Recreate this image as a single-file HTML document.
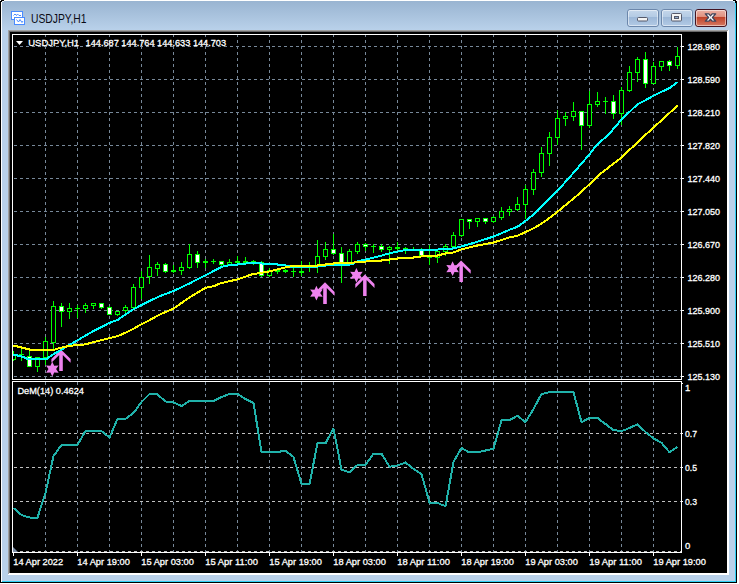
<!DOCTYPE html>
<html><head><meta charset="utf-8"><title>USDJPY,H1</title>
<style>html,body{margin:0;padding:0;background:#fff;overflow:hidden}svg{display:block}text{font-family:"Liberation Sans",sans-serif}</style>
</head><body>
<svg width="739" height="584" viewBox="0 0 739 584">
<defs>
<linearGradient id="tb" x1="0" y1="0" x2="0" y2="1"><stop offset="0" stop-color="#99b4d1"/><stop offset="1" stop-color="#b9d1ea"/></linearGradient>
<linearGradient id="bt" x1="0" y1="0" x2="0" y2="1"><stop offset="0" stop-color="#c6d7eb"/><stop offset="0.43" stop-color="#b4cbe4"/><stop offset="0.47" stop-color="#9db8d8"/><stop offset="1" stop-color="#b3cbe6"/></linearGradient>
<linearGradient id="cl" x1="0" y1="0" x2="0" y2="1"><stop offset="0" stop-color="#ecb2a6"/><stop offset="0.41" stop-color="#e09382"/><stop offset="0.45" stop-color="#bf4128"/><stop offset="1" stop-color="#d67c66"/></linearGradient>
<clipPath id="cm"><rect x="13" y="35" width="668" height="344"/></clipPath>
</defs>
<rect width="739" height="584" fill="#fff"/>
<g shape-rendering="crispEdges">
<rect x="0" y="1" width="737" height="582" fill="#000"/>
<rect x="1" y="1" width="735" height="581" fill="#fff"/>
<rect x="2" y="1" width="734" height="581" fill="#2fd0f5"/>
<rect x="2" y="1" width="733" height="580" fill="#b9d1ea"/>
<rect x="2" y="1" width="733" height="29" fill="url(#tb)"/>
<rect x="8" y="30" width="721" height="545" fill="#fff"/>
<rect x="8" y="30" width="720" height="544" fill="#a0a0a0"/>
<rect x="9" y="31" width="720" height="544" fill="#fff"/>
<rect x="9" y="31" width="718" height="542" fill="#696969"/>
<rect x="10" y="32" width="717" height="541" fill="#000"/>
<rect x="1" y="0" width="3" height="1" fill="#000"/><rect x="1" y="1" width="1" height="1" fill="#000"/><rect x="2" y="1" width="2" height="1" fill="#e8f0fa"/>
<rect x="733" y="0" width="3" height="1" fill="#000"/><rect x="735" y="1" width="2" height="2" fill="#000"/><rect x="733" y="1" width="2" height="1" fill="#d8f4fc"/><rect x="734" y="2" width="1" height="1" fill="#8fe2f8"/>
</g>
<g shape-rendering="crispEdges" stroke="#778899" stroke-width="1" fill="none" stroke-dasharray="3 3">
<line x1="45.5" y1="34" x2="45.5" y2="379" stroke-dashoffset="0"/>
<line x1="45.5" y1="382" x2="45.5" y2="552" stroke-dashoffset="0"/>
<line x1="77.5" y1="34" x2="77.5" y2="379" stroke-dashoffset="0"/>
<line x1="77.5" y1="382" x2="77.5" y2="552" stroke-dashoffset="0"/>
<line x1="109.5" y1="34" x2="109.5" y2="379" stroke-dashoffset="0"/>
<line x1="109.5" y1="382" x2="109.5" y2="552" stroke-dashoffset="0"/>
<line x1="141.5" y1="34" x2="141.5" y2="379" stroke-dashoffset="0"/>
<line x1="141.5" y1="382" x2="141.5" y2="552" stroke-dashoffset="0"/>
<line x1="173.5" y1="34" x2="173.5" y2="379" stroke-dashoffset="0"/>
<line x1="173.5" y1="382" x2="173.5" y2="552" stroke-dashoffset="0"/>
<line x1="205.5" y1="34" x2="205.5" y2="379" stroke-dashoffset="0"/>
<line x1="205.5" y1="382" x2="205.5" y2="552" stroke-dashoffset="0"/>
<line x1="237.5" y1="34" x2="237.5" y2="379" stroke-dashoffset="0"/>
<line x1="237.5" y1="382" x2="237.5" y2="552" stroke-dashoffset="0"/>
<line x1="269.5" y1="34" x2="269.5" y2="379" stroke-dashoffset="0"/>
<line x1="269.5" y1="382" x2="269.5" y2="552" stroke-dashoffset="0"/>
<line x1="301.5" y1="34" x2="301.5" y2="379" stroke-dashoffset="0"/>
<line x1="301.5" y1="382" x2="301.5" y2="552" stroke-dashoffset="0"/>
<line x1="333.5" y1="34" x2="333.5" y2="379" stroke-dashoffset="0"/>
<line x1="333.5" y1="382" x2="333.5" y2="552" stroke-dashoffset="0"/>
<line x1="365.5" y1="34" x2="365.5" y2="379" stroke-dashoffset="0"/>
<line x1="365.5" y1="382" x2="365.5" y2="552" stroke-dashoffset="0"/>
<line x1="397.5" y1="34" x2="397.5" y2="379" stroke-dashoffset="0"/>
<line x1="397.5" y1="382" x2="397.5" y2="552" stroke-dashoffset="0"/>
<line x1="429.5" y1="34" x2="429.5" y2="379" stroke-dashoffset="0"/>
<line x1="429.5" y1="382" x2="429.5" y2="552" stroke-dashoffset="0"/>
<line x1="461.5" y1="34" x2="461.5" y2="379" stroke-dashoffset="0"/>
<line x1="461.5" y1="382" x2="461.5" y2="552" stroke-dashoffset="0"/>
<line x1="493.5" y1="34" x2="493.5" y2="379" stroke-dashoffset="0"/>
<line x1="493.5" y1="382" x2="493.5" y2="552" stroke-dashoffset="0"/>
<line x1="525.5" y1="34" x2="525.5" y2="379" stroke-dashoffset="0"/>
<line x1="525.5" y1="382" x2="525.5" y2="552" stroke-dashoffset="0"/>
<line x1="557.5" y1="34" x2="557.5" y2="379" stroke-dashoffset="0"/>
<line x1="557.5" y1="382" x2="557.5" y2="552" stroke-dashoffset="0"/>
<line x1="589.5" y1="34" x2="589.5" y2="379" stroke-dashoffset="0"/>
<line x1="589.5" y1="382" x2="589.5" y2="552" stroke-dashoffset="0"/>
<line x1="621.5" y1="34" x2="621.5" y2="379" stroke-dashoffset="0"/>
<line x1="621.5" y1="382" x2="621.5" y2="552" stroke-dashoffset="0"/>
<line x1="653.5" y1="34" x2="653.5" y2="379" stroke-dashoffset="0"/>
<line x1="653.5" y1="382" x2="653.5" y2="552" stroke-dashoffset="0"/>
<line x1="14" y1="46.5" x2="681" y2="46.5"/>
<line x1="14" y1="79.5" x2="681" y2="79.5"/>
<line x1="14" y1="112.5" x2="681" y2="112.5"/>
<line x1="14" y1="145.5" x2="681" y2="145.5"/>
<line x1="14" y1="178.5" x2="681" y2="178.5"/>
<line x1="14" y1="211.5" x2="681" y2="211.5"/>
<line x1="14" y1="244.5" x2="681" y2="244.5"/>
<line x1="14" y1="277.5" x2="681" y2="277.5"/>
<line x1="14" y1="310.5" x2="681" y2="310.5"/>
<line x1="14" y1="343.5" x2="681" y2="343.5"/>
<line x1="14" y1="376.5" x2="681" y2="376.5"/>
</g>
<g shape-rendering="crispEdges" stroke="#c0c0c0" stroke-width="1" fill="none" stroke-dasharray="3 3">
<line x1="14" y1="433.5" x2="681" y2="433.5"/>
<line x1="14" y1="467.5" x2="681" y2="467.5"/>
<line x1="14" y1="501.5" x2="681" y2="501.5"/>
<line x1="14" y1="551.5" x2="681" y2="551.5"/>
</g>
<g shape-rendering="crispEdges" clip-path="url(#cm)">
<rect x="13" y="351" width="1" height="10" fill="#00ff00"/>
<rect x="11" y="355" width="5" height="5" fill="#00ff00"/>
<rect x="12" y="356" width="3" height="3" fill="#000"/>
<rect x="21" y="348" width="1" height="13" fill="#00ff00"/>
<rect x="19" y="354" width="5" height="1" fill="#00ff00"/>
<rect x="29" y="350" width="1" height="17" fill="#00ff00"/>
<rect x="27" y="356" width="5" height="11" fill="#00ff00"/>
<rect x="28" y="357" width="3" height="9" fill="#fff"/>
<rect x="37" y="357" width="1" height="15" fill="#00ff00"/>
<rect x="35" y="357" width="5" height="10" fill="#00ff00"/>
<rect x="36" y="358" width="3" height="8" fill="#000"/>
<rect x="45" y="337" width="1" height="28" fill="#00ff00"/>
<rect x="43" y="341" width="5" height="17" fill="#00ff00"/>
<rect x="44" y="342" width="3" height="15" fill="#000"/>
<rect x="53" y="301" width="1" height="48" fill="#00ff00"/>
<rect x="51" y="306" width="5" height="37" fill="#00ff00"/>
<rect x="52" y="307" width="3" height="35" fill="#000"/>
<rect x="61" y="303" width="1" height="24" fill="#00ff00"/>
<rect x="59" y="306" width="5" height="6" fill="#00ff00"/>
<rect x="60" y="307" width="3" height="4" fill="#fff"/>
<rect x="69" y="303" width="1" height="16" fill="#00ff00"/>
<rect x="67" y="308" width="5" height="4" fill="#00ff00"/>
<rect x="68" y="309" width="3" height="2" fill="#000"/>
<rect x="77" y="305" width="1" height="13" fill="#00ff00"/>
<rect x="75" y="308" width="5" height="1" fill="#00ff00"/>
<rect x="85" y="303" width="1" height="10" fill="#00ff00"/>
<rect x="83" y="305" width="5" height="4" fill="#00ff00"/>
<rect x="84" y="306" width="3" height="2" fill="#000"/>
<rect x="93" y="303" width="1" height="6" fill="#00ff00"/>
<rect x="91" y="303" width="5" height="3" fill="#00ff00"/>
<rect x="92" y="304" width="3" height="1" fill="#000"/>
<rect x="101" y="303" width="1" height="6" fill="#00ff00"/>
<rect x="99" y="303" width="5" height="5" fill="#00ff00"/>
<rect x="100" y="304" width="3" height="3" fill="#fff"/>
<rect x="109" y="306" width="1" height="9" fill="#00ff00"/>
<rect x="107" y="307" width="5" height="8" fill="#00ff00"/>
<rect x="108" y="308" width="3" height="6" fill="#fff"/>
<rect x="117" y="311" width="1" height="5" fill="#00ff00"/>
<rect x="115" y="311" width="5" height="4" fill="#00ff00"/>
<rect x="116" y="312" width="3" height="2" fill="#000"/>
<rect x="125" y="305" width="1" height="8" fill="#00ff00"/>
<rect x="123" y="307" width="5" height="4" fill="#00ff00"/>
<rect x="124" y="308" width="3" height="2" fill="#000"/>
<rect x="133" y="284" width="1" height="24" fill="#00ff00"/>
<rect x="131" y="287" width="5" height="21" fill="#00ff00"/>
<rect x="132" y="288" width="3" height="19" fill="#000"/>
<rect x="141" y="271" width="1" height="28" fill="#00ff00"/>
<rect x="139" y="277" width="5" height="11" fill="#00ff00"/>
<rect x="140" y="278" width="3" height="9" fill="#000"/>
<rect x="149" y="255" width="1" height="29" fill="#00ff00"/>
<rect x="147" y="267" width="5" height="10" fill="#00ff00"/>
<rect x="148" y="268" width="3" height="8" fill="#000"/>
<rect x="157" y="262" width="1" height="14" fill="#00ff00"/>
<rect x="155" y="264" width="5" height="5" fill="#00ff00"/>
<rect x="156" y="265" width="3" height="3" fill="#000"/>
<rect x="165" y="263" width="1" height="10" fill="#00ff00"/>
<rect x="163" y="264" width="5" height="8" fill="#00ff00"/>
<rect x="164" y="265" width="3" height="6" fill="#fff"/>
<rect x="173" y="265" width="1" height="8" fill="#00ff00"/>
<rect x="171" y="270" width="5" height="2" fill="#00ff00"/>
<rect x="181" y="262" width="1" height="13" fill="#00ff00"/>
<rect x="179" y="267" width="5" height="4" fill="#00ff00"/>
<rect x="180" y="268" width="3" height="2" fill="#000"/>
<rect x="189" y="244" width="1" height="25" fill="#00ff00"/>
<rect x="187" y="254" width="5" height="14" fill="#00ff00"/>
<rect x="188" y="255" width="3" height="12" fill="#000"/>
<rect x="197" y="251" width="1" height="17" fill="#00ff00"/>
<rect x="195" y="254" width="5" height="9" fill="#00ff00"/>
<rect x="196" y="255" width="3" height="7" fill="#fff"/>
<rect x="205" y="259" width="1" height="9" fill="#00ff00"/>
<rect x="203" y="261" width="5" height="2" fill="#00ff00"/>
<rect x="213" y="259" width="1" height="5" fill="#00ff00"/>
<rect x="211" y="261" width="5" height="1" fill="#00ff00"/>
<rect x="221" y="261" width="1" height="6" fill="#00ff00"/>
<rect x="219" y="261" width="5" height="4" fill="#00ff00"/>
<rect x="220" y="262" width="3" height="2" fill="#fff"/>
<rect x="229" y="259" width="1" height="7" fill="#00ff00"/>
<rect x="227" y="262" width="5" height="4" fill="#00ff00"/>
<rect x="228" y="263" width="3" height="2" fill="#000"/>
<rect x="237" y="256" width="1" height="7" fill="#00ff00"/>
<rect x="235" y="261" width="5" height="2" fill="#00ff00"/>
<rect x="245" y="257" width="1" height="6" fill="#00ff00"/>
<rect x="243" y="261" width="5" height="2" fill="#00ff00"/>
<rect x="253" y="260" width="1" height="5" fill="#00ff00"/>
<rect x="251" y="261" width="5" height="1" fill="#00ff00"/>
<rect x="261" y="261" width="1" height="16" fill="#00ff00"/>
<rect x="259" y="262" width="5" height="14" fill="#00ff00"/>
<rect x="260" y="263" width="3" height="12" fill="#fff"/>
<rect x="269" y="268" width="1" height="9" fill="#00ff00"/>
<rect x="267" y="270" width="5" height="6" fill="#00ff00"/>
<rect x="268" y="271" width="3" height="4" fill="#000"/>
<rect x="277" y="269" width="1" height="5" fill="#00ff00"/>
<rect x="275" y="270" width="5" height="2" fill="#00ff00"/>
<rect x="285" y="269" width="1" height="4" fill="#00ff00"/>
<rect x="283" y="270" width="5" height="2" fill="#00ff00"/>
<rect x="293" y="267" width="1" height="10" fill="#00ff00"/>
<rect x="291" y="271" width="5" height="1" fill="#00ff00"/>
<rect x="301" y="261" width="1" height="15" fill="#00ff00"/>
<rect x="299" y="271" width="5" height="2" fill="#00ff00"/>
<rect x="309" y="262" width="1" height="10" fill="#00ff00"/>
<rect x="307" y="266" width="5" height="1" fill="#00ff00"/>
<rect x="317" y="240" width="1" height="33" fill="#00ff00"/>
<rect x="315" y="256" width="5" height="10" fill="#00ff00"/>
<rect x="316" y="257" width="3" height="8" fill="#000"/>
<rect x="325" y="242" width="1" height="18" fill="#00ff00"/>
<rect x="323" y="249" width="5" height="8" fill="#00ff00"/>
<rect x="324" y="250" width="3" height="6" fill="#000"/>
<rect x="333" y="234" width="1" height="21" fill="#00ff00"/>
<rect x="331" y="249" width="5" height="5" fill="#00ff00"/>
<rect x="332" y="250" width="3" height="3" fill="#fff"/>
<rect x="341" y="247" width="1" height="36" fill="#00ff00"/>
<rect x="339" y="253" width="5" height="10" fill="#00ff00"/>
<rect x="340" y="254" width="3" height="8" fill="#fff"/>
<rect x="349" y="249" width="1" height="14" fill="#00ff00"/>
<rect x="347" y="251" width="5" height="12" fill="#00ff00"/>
<rect x="348" y="252" width="3" height="10" fill="#000"/>
<rect x="357" y="242" width="1" height="12" fill="#00ff00"/>
<rect x="355" y="244" width="5" height="8" fill="#00ff00"/>
<rect x="356" y="245" width="3" height="6" fill="#000"/>
<rect x="365" y="243" width="1" height="8" fill="#00ff00"/>
<rect x="363" y="244" width="5" height="3" fill="#00ff00"/>
<rect x="364" y="245" width="3" height="1" fill="#fff"/>
<rect x="373" y="244" width="1" height="9" fill="#00ff00"/>
<rect x="371" y="246" width="5" height="1" fill="#00ff00"/>
<rect x="381" y="244" width="1" height="8" fill="#00ff00"/>
<rect x="379" y="246" width="5" height="4" fill="#00ff00"/>
<rect x="380" y="247" width="3" height="2" fill="#fff"/>
<rect x="389" y="246" width="1" height="18" fill="#00ff00"/>
<rect x="387" y="247" width="5" height="3" fill="#00ff00"/>
<rect x="388" y="248" width="3" height="1" fill="#000"/>
<rect x="397" y="242" width="1" height="8" fill="#00ff00"/>
<rect x="395" y="247" width="5" height="2" fill="#00ff00"/>
<rect x="405" y="247" width="1" height="7" fill="#00ff00"/>
<rect x="403" y="248" width="5" height="1" fill="#00ff00"/>
<rect x="413" y="247" width="1" height="4" fill="#00ff00"/>
<rect x="411" y="250" width="5" height="1" fill="#00ff00"/>
<rect x="421" y="248" width="1" height="8" fill="#00ff00"/>
<rect x="419" y="250" width="5" height="6" fill="#00ff00"/>
<rect x="420" y="251" width="3" height="4" fill="#fff"/>
<rect x="429" y="245" width="1" height="20" fill="#00ff00"/>
<rect x="427" y="256" width="5" height="2" fill="#00ff00"/>
<rect x="437" y="251" width="1" height="12" fill="#00ff00"/>
<rect x="435" y="251" width="5" height="7" fill="#00ff00"/>
<rect x="436" y="252" width="3" height="5" fill="#000"/>
<rect x="445" y="244" width="1" height="12" fill="#00ff00"/>
<rect x="443" y="246" width="5" height="6" fill="#00ff00"/>
<rect x="444" y="247" width="3" height="4" fill="#000"/>
<rect x="453" y="232" width="1" height="15" fill="#00ff00"/>
<rect x="451" y="235" width="5" height="12" fill="#00ff00"/>
<rect x="452" y="236" width="3" height="10" fill="#000"/>
<rect x="461" y="219" width="1" height="18" fill="#00ff00"/>
<rect x="459" y="219" width="5" height="17" fill="#00ff00"/>
<rect x="460" y="220" width="3" height="15" fill="#000"/>
<rect x="469" y="219" width="1" height="10" fill="#00ff00"/>
<rect x="467" y="219" width="5" height="3" fill="#00ff00"/>
<rect x="468" y="220" width="3" height="1" fill="#fff"/>
<rect x="477" y="218" width="1" height="9" fill="#00ff00"/>
<rect x="475" y="218" width="5" height="4" fill="#00ff00"/>
<rect x="476" y="219" width="3" height="2" fill="#000"/>
<rect x="485" y="218" width="1" height="6" fill="#00ff00"/>
<rect x="483" y="218" width="5" height="4" fill="#00ff00"/>
<rect x="484" y="219" width="3" height="2" fill="#fff"/>
<rect x="493" y="216" width="1" height="7" fill="#00ff00"/>
<rect x="491" y="217" width="5" height="5" fill="#00ff00"/>
<rect x="492" y="218" width="3" height="3" fill="#000"/>
<rect x="501" y="207" width="1" height="13" fill="#00ff00"/>
<rect x="499" y="211" width="5" height="7" fill="#00ff00"/>
<rect x="500" y="212" width="3" height="5" fill="#000"/>
<rect x="509" y="206" width="1" height="10" fill="#00ff00"/>
<rect x="507" y="209" width="5" height="3" fill="#00ff00"/>
<rect x="508" y="210" width="3" height="1" fill="#000"/>
<rect x="517" y="197" width="1" height="14" fill="#00ff00"/>
<rect x="515" y="204" width="5" height="6" fill="#00ff00"/>
<rect x="516" y="205" width="3" height="4" fill="#000"/>
<rect x="525" y="185" width="1" height="34" fill="#00ff00"/>
<rect x="523" y="189" width="5" height="16" fill="#00ff00"/>
<rect x="524" y="190" width="3" height="14" fill="#000"/>
<rect x="533" y="169" width="1" height="26" fill="#00ff00"/>
<rect x="531" y="172" width="5" height="18" fill="#00ff00"/>
<rect x="532" y="173" width="3" height="16" fill="#000"/>
<rect x="541" y="147" width="1" height="30" fill="#00ff00"/>
<rect x="539" y="153" width="5" height="20" fill="#00ff00"/>
<rect x="540" y="154" width="3" height="18" fill="#000"/>
<rect x="549" y="132" width="1" height="34" fill="#00ff00"/>
<rect x="547" y="137" width="5" height="17" fill="#00ff00"/>
<rect x="548" y="138" width="3" height="15" fill="#000"/>
<rect x="557" y="110" width="1" height="35" fill="#00ff00"/>
<rect x="555" y="118" width="5" height="20" fill="#00ff00"/>
<rect x="556" y="119" width="3" height="18" fill="#000"/>
<rect x="565" y="112" width="1" height="14" fill="#00ff00"/>
<rect x="563" y="116" width="5" height="3" fill="#00ff00"/>
<rect x="564" y="117" width="3" height="1" fill="#000"/>
<rect x="573" y="102" width="1" height="19" fill="#00ff00"/>
<rect x="571" y="111" width="5" height="6" fill="#00ff00"/>
<rect x="572" y="112" width="3" height="4" fill="#000"/>
<rect x="581" y="111" width="1" height="39" fill="#00ff00"/>
<rect x="579" y="111" width="5" height="15" fill="#00ff00"/>
<rect x="580" y="112" width="3" height="13" fill="#fff"/>
<rect x="589" y="91" width="1" height="37" fill="#00ff00"/>
<rect x="587" y="104" width="5" height="22" fill="#00ff00"/>
<rect x="588" y="105" width="3" height="20" fill="#000"/>
<rect x="597" y="92" width="1" height="15" fill="#00ff00"/>
<rect x="595" y="101" width="5" height="4" fill="#00ff00"/>
<rect x="596" y="102" width="3" height="2" fill="#000"/>
<rect x="605" y="97" width="1" height="17" fill="#00ff00"/>
<rect x="603" y="101" width="5" height="1" fill="#00ff00"/>
<rect x="613" y="95" width="1" height="24" fill="#00ff00"/>
<rect x="611" y="101" width="5" height="13" fill="#00ff00"/>
<rect x="612" y="102" width="3" height="11" fill="#fff"/>
<rect x="621" y="87" width="1" height="38" fill="#00ff00"/>
<rect x="619" y="90" width="5" height="24" fill="#00ff00"/>
<rect x="620" y="91" width="3" height="22" fill="#000"/>
<rect x="629" y="66" width="1" height="26" fill="#00ff00"/>
<rect x="627" y="72" width="5" height="19" fill="#00ff00"/>
<rect x="628" y="73" width="3" height="17" fill="#000"/>
<rect x="637" y="57" width="1" height="25" fill="#00ff00"/>
<rect x="635" y="59" width="5" height="14" fill="#00ff00"/>
<rect x="636" y="60" width="3" height="12" fill="#000"/>
<rect x="645" y="52" width="1" height="36" fill="#00ff00"/>
<rect x="643" y="59" width="5" height="25" fill="#00ff00"/>
<rect x="644" y="60" width="3" height="23" fill="#fff"/>
<rect x="653" y="62" width="1" height="22" fill="#00ff00"/>
<rect x="651" y="66" width="5" height="18" fill="#00ff00"/>
<rect x="652" y="67" width="3" height="16" fill="#000"/>
<rect x="661" y="61" width="1" height="10" fill="#00ff00"/>
<rect x="659" y="61" width="5" height="6" fill="#00ff00"/>
<rect x="660" y="62" width="3" height="4" fill="#000"/>
<rect x="669" y="60" width="1" height="11" fill="#00ff00"/>
<rect x="667" y="61" width="5" height="5" fill="#00ff00"/>
<rect x="668" y="62" width="3" height="3" fill="#fff"/>
<rect x="677" y="47" width="1" height="22" fill="#00ff00"/>
<rect x="675" y="56" width="5" height="10" fill="#00ff00"/>
<rect x="676" y="57" width="3" height="8" fill="#000"/>
</g>
<polygon points="61.0,349.4 70.6,359.0 70.6,362.8 62.8,354.9 62.8,371.0 59.2,371.0 59.2,354.9 51.4,362.8 51.4,359.0" fill="#ee82ee"/>
<polygon points="52.3,361.8 54.2,365.8 58.6,365.5 56.1,369.1 58.6,372.8 54.2,372.4 52.3,376.4 50.4,372.4 46.0,372.8 48.5,369.1 46.0,365.5 50.4,365.8" fill="#ee82ee"/>
<polygon points="325.0,282.3 334.6,291.9 334.6,295.7 326.8,287.9 326.8,303.9 323.2,303.9 323.2,287.9 315.4,295.7 315.4,291.9" fill="#ee82ee"/>
<polygon points="316.4,285.8 318.3,289.8 322.7,289.5 320.2,293.1 322.7,296.8 318.3,296.4 316.4,300.4 314.5,296.4 310.1,296.8 312.6,293.1 310.1,289.5 314.5,289.8" fill="#ee82ee"/>
<polygon points="364.9,274.5 374.5,284.1 374.5,287.9 366.6,280.1 366.6,296.1 363.1,296.1 363.1,280.1 355.3,287.9 355.3,284.1" fill="#ee82ee"/>
<polygon points="356.4,268.0 358.3,272.0 362.7,271.7 360.2,275.3 362.7,278.9 358.3,278.6 356.4,282.6 354.5,278.6 350.1,278.9 352.6,275.3 350.1,271.7 354.5,272.0" fill="#ee82ee"/>
<polygon points="461.1,260.4 470.7,270.0 470.7,273.8 462.9,265.9 462.9,282.0 459.4,282.0 459.4,265.9 451.5,273.8 451.5,270.0" fill="#ee82ee"/>
<polygon points="452.6,261.3 454.5,265.3 458.9,265.0 456.4,268.6 458.9,272.2 454.5,271.9 452.6,275.9 450.7,271.9 446.3,272.2 448.8,268.6 446.3,265.0 450.7,265.3" fill="#ee82ee"/>
<polyline points="13.0,355.0 17.3,355.0 18.3,356.0 21.4,356.0 22.4,357.0 24.4,357.0 25.4,358.0 26.3,358.0 27.3,359.0 46.8,359.0 53.3,354.2 60.9,350.1 68.4,345.6 77.6,340.2 90.8,332.5 109.2,323.0 117.9,319.8 125.5,314.4 133.0,309.6 141.7,304.8 149.3,301.0 160.0,296.1 173.6,291.0 189.6,283.4 205.5,275.2 220.0,267.8 222.5,266.7 230.0,265.0 237.2,265.0 238.2,264.0 245.5,264.0 246.5,263.0 261.5,263.0 262.5,264.0 277.0,264.0 278.0,265.0 285.5,265.0 286.5,266.0 293.5,267.0 317.0,267.0 318.0,266.0 325.5,266.0 326.5,265.0 349.0,265.0 350.0,264.0 352.5,264.0 354.0,263.0 357.0,261.5 365.5,259.6 381.4,255.6 389.5,253.3 397.5,251.6 405.5,250.0 430.0,250.0 437.5,250.0 438.5,249.0 452.0,249.0 453.5,248.0 457.0,247.6 461.5,246.4 477.5,241.7 493.6,236.5 509.5,229.8 517.4,226.8 525.6,220.9 535.0,213.4 557.5,190.9 569.4,177.5 589.5,154.4 595.4,146.4 609.5,133.6 621.4,119.6 637.8,104.0 645.0,100.5 653.6,95.6 669.7,88.0 677.6,82.0" fill="none" stroke="#00ffff" stroke-width="2" shape-rendering="crispEdges" stroke-linejoin="round"/>
<polyline points="13.0,346.0 17.3,346.0 18.3,347.0 21.4,347.0 22.4,348.0 25.2,348.0 26.2,349.0 29.3,349.0 30.3,350.0 53.3,350.0 60.9,347.7 68.4,346.1 77.6,345.0 85.4,344.4 94.0,342.0 109.2,338.2 117.9,336.0 125.5,332.7 134.1,328.4 141.7,324.1 149.3,320.3 160.0,314.4 173.6,308.6 189.6,297.3 205.5,287.9 215.0,285.8 220.0,283.4 237.4,279.4 252.3,274.2 269.4,271.5 286.0,267.2 293.5,266.0 317.0,266.0 318.0,265.0 324.7,265.0 325.7,264.0 333.2,264.0 334.2,263.0 353.5,263.0 354.5,262.0 365.5,262.0 366.5,261.0 381.2,261.0 382.2,260.0 389.3,260.0 390.3,259.0 397.4,259.0 398.4,258.0 413.0,258.0 414.0,257.0 420.5,257.0 421.5,256.0 430.0,256.0 437.0,256.0 438.0,255.0 441.4,255.0 442.4,254.0 445.3,254.0 446.3,253.0 450.0,253.0 453.4,252.4 461.5,249.3 477.5,245.5 493.6,242.5 509.5,237.3 517.4,235.8 525.6,232.0 535.0,227.6 544.8,221.4 557.5,211.8 579.0,193.9 589.5,184.2 601.4,173.0 621.6,157.4 625.0,153.6 633.4,146.4 645.0,135.3 677.6,105.6" fill="none" stroke="#ffff00" stroke-width="2" shape-rendering="crispEdges" stroke-linejoin="round"/>
<polyline points="13.5,508.0 21.5,515.0 29.5,517.5 37.5,517.5 45.5,493.0 53.5,456.0 61.5,445.0 69.5,445.0 77.5,445.0 85.5,431.0 93.5,431.0 101.5,431.0 109.5,437.5 117.5,419.0 125.5,419.0 133.5,413.0 141.5,402.0 149.5,394.0 157.5,394.5 165.5,401.5 173.5,402.5 181.5,406.0 189.5,401.0 197.5,401.0 205.5,401.0 213.5,401.0 221.5,397.0 229.5,394.0 237.5,394.0 245.5,399.0 253.5,403.0 261.5,452.0 269.5,452.0 277.5,452.0 285.5,450.7 293.5,457.0 301.5,484.0 309.5,484.0 317.5,443.3 325.5,443.3 333.5,428.6 341.5,469.7 349.5,472.3 357.5,465.0 365.5,465.0 373.5,453.6 381.5,453.6 389.5,466.7 397.5,465.4 405.5,462.5 413.5,469.0 421.5,474.0 429.5,502.6 437.5,503.0 445.5,506.2 453.5,462.0 461.5,448.0 469.5,452.5 477.5,452.3 485.5,450.5 493.5,448.7 501.5,420.2 509.5,420.2 517.5,415.8 525.5,422.2 533.5,409.0 541.5,394.0 549.5,392.2 557.5,392.2 565.5,392.2 573.5,392.2 581.5,422.2 589.5,418.0 597.5,418.0 605.5,424.0 613.5,430.0 621.5,431.2 629.5,428.0 637.5,424.3 645.5,432.0 653.5,438.4 661.5,442.8 669.5,452.3 677.5,446.8" fill="none" stroke="#20b2aa" stroke-width="2" shape-rendering="crispEdges" stroke-linejoin="round"/>
<g shape-rendering="crispEdges" fill="#fff">
<rect x="12" y="34" width="670" height="1"/>
<rect x="12" y="34" width="1" height="519"/>
<rect x="681" y="34" width="1" height="519"/>
<rect x="12" y="379" width="670" height="1"/>
<rect x="12" y="380" width="670" height="1" fill="#000"/>
<rect x="12" y="381" width="670" height="1"/>
<rect x="12" y="552" width="670" height="1"/>
<rect x="682" y="46" width="2" height="1"/>
<rect x="682" y="79" width="2" height="1"/>
<rect x="682" y="112" width="2" height="1"/>
<rect x="682" y="145" width="2" height="1"/>
<rect x="682" y="178" width="2" height="1"/>
<rect x="682" y="211" width="2" height="1"/>
<rect x="682" y="244" width="2" height="1"/>
<rect x="682" y="277" width="2" height="1"/>
<rect x="682" y="310" width="2" height="1"/>
<rect x="682" y="343" width="2" height="1"/>
<rect x="682" y="376" width="2" height="1"/>
<rect x="682" y="433" width="1" height="1"/>
<rect x="682" y="467" width="1" height="1"/>
<rect x="682" y="501" width="1" height="1"/>
<rect x="682" y="383" width="1" height="1"/>
<rect x="13" y="553" width="1" height="3"/>
<rect x="77" y="553" width="1" height="3"/>
<rect x="141" y="553" width="1" height="3"/>
<rect x="205" y="553" width="1" height="3"/>
<rect x="269" y="553" width="1" height="3"/>
<rect x="333" y="553" width="1" height="3"/>
<rect x="397" y="553" width="1" height="3"/>
<rect x="461" y="553" width="1" height="3"/>
<rect x="525" y="553" width="1" height="3"/>
<rect x="589" y="553" width="1" height="3"/>
<rect x="653" y="553" width="1" height="3"/>
</g>
<polygon points="13,547 13,552 18,552" fill="#7d8ea6"/>
<text x="687.5" y="49.7" font-size="9.5" fill="#fff" stroke="#fff" stroke-width="0.3" text-anchor="start" textLength="32.5" lengthAdjust="spacingAndGlyphs">128.980</text>
<text x="687.5" y="82.7" font-size="9.5" fill="#fff" stroke="#fff" stroke-width="0.3" text-anchor="start" textLength="32.5" lengthAdjust="spacingAndGlyphs">128.590</text>
<text x="687.5" y="115.7" font-size="9.5" fill="#fff" stroke="#fff" stroke-width="0.3" text-anchor="start" textLength="32.5" lengthAdjust="spacingAndGlyphs">128.210</text>
<text x="687.5" y="148.7" font-size="9.5" fill="#fff" stroke="#fff" stroke-width="0.3" text-anchor="start" textLength="32.5" lengthAdjust="spacingAndGlyphs">127.820</text>
<text x="687.5" y="181.7" font-size="9.5" fill="#fff" stroke="#fff" stroke-width="0.3" text-anchor="start" textLength="32.5" lengthAdjust="spacingAndGlyphs">127.440</text>
<text x="687.5" y="214.7" font-size="9.5" fill="#fff" stroke="#fff" stroke-width="0.3" text-anchor="start" textLength="32.5" lengthAdjust="spacingAndGlyphs">127.050</text>
<text x="687.5" y="247.7" font-size="9.5" fill="#fff" stroke="#fff" stroke-width="0.3" text-anchor="start" textLength="32.5" lengthAdjust="spacingAndGlyphs">126.670</text>
<text x="687.5" y="280.7" font-size="9.5" fill="#fff" stroke="#fff" stroke-width="0.3" text-anchor="start" textLength="32.5" lengthAdjust="spacingAndGlyphs">126.280</text>
<text x="687.5" y="313.7" font-size="9.5" fill="#fff" stroke="#fff" stroke-width="0.3" text-anchor="start" textLength="32.5" lengthAdjust="spacingAndGlyphs">125.900</text>
<text x="687.5" y="346.7" font-size="9.5" fill="#fff" stroke="#fff" stroke-width="0.3" text-anchor="start" textLength="32.5" lengthAdjust="spacingAndGlyphs">125.510</text>
<text x="687.5" y="379.7" font-size="9.5" fill="#fff" stroke="#fff" stroke-width="0.3" text-anchor="start" textLength="32.5" lengthAdjust="spacingAndGlyphs">125.130</text>
<text x="685" y="391.4" font-size="9.5" fill="#fff" stroke="#fff" stroke-width="0.3" text-anchor="start">1</text>
<text x="685" y="437" font-size="9.5" fill="#fff" stroke="#fff" stroke-width="0.3" text-anchor="start" textLength="12" lengthAdjust="spacingAndGlyphs">0.7</text>
<text x="685" y="471" font-size="9.5" fill="#fff" stroke="#fff" stroke-width="0.3" text-anchor="start" textLength="12" lengthAdjust="spacingAndGlyphs">0.5</text>
<text x="685" y="505" font-size="9.5" fill="#fff" stroke="#fff" stroke-width="0.3" text-anchor="start" textLength="12" lengthAdjust="spacingAndGlyphs">0.3</text>
<text x="685" y="549" font-size="9.5" fill="#fff" stroke="#fff" stroke-width="0.3" text-anchor="start">0</text>
<text x="13.3" y="565" font-size="9.5" fill="#fff" stroke="#fff" stroke-width="0.3" text-anchor="start" textLength="49.8" lengthAdjust="spacingAndGlyphs">14 Apr 2022</text>
<text x="77.3" y="565" font-size="9.5" fill="#fff" stroke="#fff" stroke-width="0.3" text-anchor="start" textLength="52.6" lengthAdjust="spacingAndGlyphs">14 Apr 19:00</text>
<text x="141.3" y="565" font-size="9.5" fill="#fff" stroke="#fff" stroke-width="0.3" text-anchor="start" textLength="52.6" lengthAdjust="spacingAndGlyphs">15 Apr 03:00</text>
<text x="205.3" y="565" font-size="9.5" fill="#fff" stroke="#fff" stroke-width="0.3" text-anchor="start" textLength="52.6" lengthAdjust="spacingAndGlyphs">15 Apr 11:00</text>
<text x="269.3" y="565" font-size="9.5" fill="#fff" stroke="#fff" stroke-width="0.3" text-anchor="start" textLength="52.6" lengthAdjust="spacingAndGlyphs">15 Apr 19:00</text>
<text x="333.3" y="565" font-size="9.5" fill="#fff" stroke="#fff" stroke-width="0.3" text-anchor="start" textLength="52.6" lengthAdjust="spacingAndGlyphs">18 Apr 03:00</text>
<text x="397.3" y="565" font-size="9.5" fill="#fff" stroke="#fff" stroke-width="0.3" text-anchor="start" textLength="52.6" lengthAdjust="spacingAndGlyphs">18 Apr 11:00</text>
<text x="461.3" y="565" font-size="9.5" fill="#fff" stroke="#fff" stroke-width="0.3" text-anchor="start" textLength="52.6" lengthAdjust="spacingAndGlyphs">18 Apr 19:00</text>
<text x="525.3" y="565" font-size="9.5" fill="#fff" stroke="#fff" stroke-width="0.3" text-anchor="start" textLength="52.6" lengthAdjust="spacingAndGlyphs">19 Apr 03:00</text>
<text x="589.3" y="565" font-size="9.5" fill="#fff" stroke="#fff" stroke-width="0.3" text-anchor="start" textLength="52.6" lengthAdjust="spacingAndGlyphs">19 Apr 11:00</text>
<text x="653.3" y="565" font-size="9.5" fill="#fff" stroke="#fff" stroke-width="0.3" text-anchor="start" textLength="52.6" lengthAdjust="spacingAndGlyphs">19 Apr 19:00</text>
<polygon points="16,41 23,41 19.5,45" fill="#fff"/>
<text x="28.3" y="46" font-size="9.5" fill="#fff" stroke="#fff" stroke-width="0.3" text-anchor="start" textLength="50.8" lengthAdjust="spacingAndGlyphs">USDJPY,H1</text>
<text x="85.6" y="46" font-size="9.5" fill="#fff" stroke="#fff" stroke-width="0.3" text-anchor="start" textLength="140.5" lengthAdjust="spacingAndGlyphs">144.687 144.764 144.633 144.703</text>
<text x="17.4" y="394" font-size="9.5" fill="#fff" stroke="#fff" stroke-width="0.3" text-anchor="start" textLength="66.6" lengthAdjust="spacingAndGlyphs">DeM(14) 0.4624</text>
<text x="31" y="23" font-size="12.5" fill="#0a0a14" stroke="#0a0a14" stroke-width="0" text-anchor="start" textLength="55.5" lengthAdjust="spacingAndGlyphs">USDJPY,H1</text>
<g shape-rendering="crispEdges">
<rect x="11" y="11" width="12" height="9" fill="#4a8cff"/><rect x="12" y="12" width="10" height="7" fill="#fff"/>
<rect x="14" y="17" width="11" height="8" fill="#4a8cff"/><rect x="15" y="18" width="9" height="6" fill="#fff"/>
</g>
<polyline points="13.5,15.5 15,14 16.5,15.5 17.5,14 19,15.5 21,15.5" fill="none" stroke="#4a8cff" stroke-width="1"/>
<polyline points="16.5,19.5 18.5,22 20,19.5 22,22.5 23,21" fill="none" stroke="#4a8cff" stroke-width="1"/>
<rect x="627.5" y="9.5" width="31" height="17" rx="2.5" ry="2.5" fill="url(#bt)" stroke="#6c87ab" stroke-width="1"/><rect x="628.5" y="10.5" width="29" height="15" rx="1.5" ry="1.5" fill="none" stroke="#fff" stroke-opacity="0.5" stroke-width="1"/>
<rect x="661.5" y="9.5" width="31" height="17" rx="2.5" ry="2.5" fill="url(#bt)" stroke="#6c87ab" stroke-width="1"/><rect x="662.5" y="10.5" width="29" height="15" rx="1.5" ry="1.5" fill="none" stroke="#fff" stroke-opacity="0.5" stroke-width="1"/>
<rect x="695.5" y="9.5" width="31" height="17" rx="2.5" ry="2.5" fill="url(#cl)" stroke="#431422" stroke-width="1"/><rect x="696.5" y="10.5" width="29" height="15" rx="1.5" ry="1.5" fill="none" stroke="#fff" stroke-opacity="0.5" stroke-width="1"/>
<rect x="637.5" y="17.5" width="10" height="3.5" rx="1" fill="#f4f4f4" stroke="#55596a" stroke-width="1"/>
<rect x="671.5" y="13.5" width="10" height="7.5" rx="1" fill="#f4f4f4" stroke="#55596a" stroke-width="1"/><rect x="674.5" y="16.5" width="4" height="2" fill="#8fa9c9" stroke="#55596a" stroke-width="1"/>
<path d="M705.3 13.8 h3.6 l1.6 2 l1.6 -2 h3.6 l-3.3 3.7 l3.3 3.7 h-3.6 l-1.6 -2 l-1.6 2 h-3.6 l3.3 -3.7 z" fill="#fafafa" stroke="#3f4258" stroke-width="1.2" stroke-linejoin="round"/>
</svg></body></html>
